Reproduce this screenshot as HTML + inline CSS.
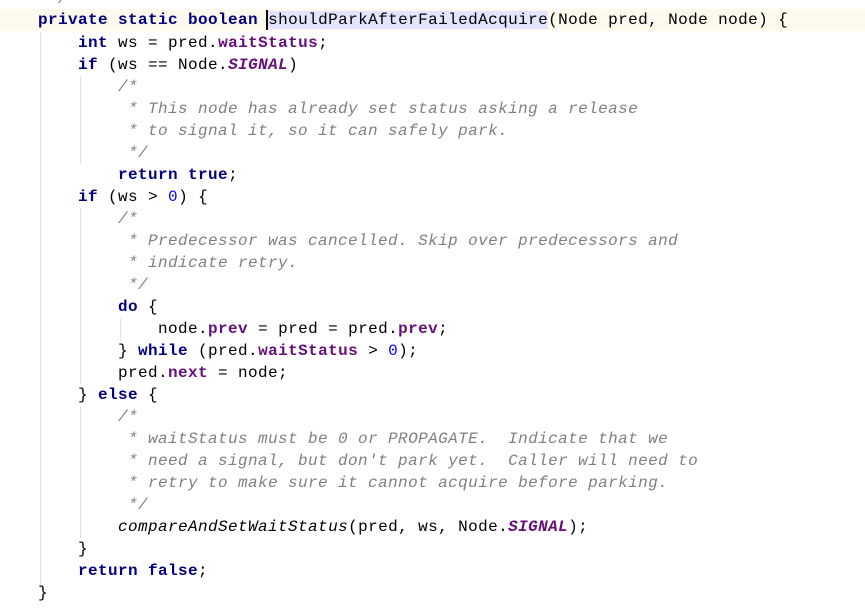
<!DOCTYPE html>
<html><head><style>
html,body{margin:0;padding:0;background:#fff;width:865px;height:609px;overflow:hidden;position:relative}
.w{position:absolute;left:0;top:1px;width:865px;height:609px}
.l{position:absolute;left:-2px;height:22px;line-height:22px;white-space:pre;font-family:"Liberation Mono",monospace;font-size:16px;letter-spacing:0.4px;color:#000}
.k{color:#000080;font-weight:bold}
.f{color:#660e7a;font-weight:bold}
.s{color:#660e7a;font-weight:bold;font-style:italic}
.c{color:#808080;font-style:italic}
.n{color:#0000ff}
.i{font-style:italic}
.hl{background:#e4e4ff}
.g{position:absolute;width:1px;background:#e2e2e2}
</style></head><body>
<div style="position:absolute;left:0;top:9px;width:865px;height:22px;background:#fdf9ec"></div>
<div class="w">
<div class="g" style="left:40px;top:31px;height:556px"></div>
<div class="g" style="left:80px;top:75px;height:88px"></div>
<div class="g" style="left:80px;top:207px;height:176px"></div>
<div class="g" style="left:120px;top:317px;height:22px"></div>
<div class="g" style="left:80px;top:405px;height:132px"></div>
<div class="l c" style="top:-13px">     */</div>
<div class="l" style="top:8px">    <span class="k">private static boolean</span> <span class="hl">shouldParkAfterFailedAcquire</span>(Node pred, Node node) {</div>
<div style="position:absolute;left:266px;top:9px;width:2px;height:20px;background:#000"></div>
<div class="l" style="top:31px">        <span class="k">int</span> ws = pred.<span class="f">waitStatus</span>;</div>
<div class="l" style="top:53px">        <span class="k">if</span> (ws == Node.<span class="s">SIGNAL</span>)</div>
<div class="l c" style="top:75px">            /*</div>
<div class="l c" style="top:97px">             * This node has already set status asking a release</div>
<div class="l c" style="top:119px">             * to signal it, so it can safely park.</div>
<div class="l c" style="top:141px">             */</div>
<div class="l" style="top:163px">            <span class="k">return true</span>;</div>
<div class="l" style="top:185px">        <span class="k">if</span> (ws &gt; <span class="n">0</span>) {</div>
<div class="l c" style="top:207px">            /*</div>
<div class="l c" style="top:229px">             * Predecessor was cancelled. Skip over predecessors and</div>
<div class="l c" style="top:251px">             * indicate retry.</div>
<div class="l c" style="top:273px">             */</div>
<div class="l" style="top:295px">            <span class="k">do</span> {</div>
<div class="l" style="top:317px">                node.<span class="f">prev</span> = pred = pred.<span class="f">prev</span>;</div>
<div class="l" style="top:339px">            } <span class="k">while</span> (pred.<span class="f">waitStatus</span> &gt; <span class="n">0</span>);</div>
<div class="l" style="top:361px">            pred.<span class="f">next</span> = node;</div>
<div class="l" style="top:383px">        } <span class="k">else</span> {</div>
<div class="l c" style="top:405px">            /*</div>
<div class="l c" style="top:427px">             * waitStatus must be 0 or PROPAGATE.  Indicate that we</div>
<div class="l c" style="top:449px">             * need a signal, but don't park yet.  Caller will need to</div>
<div class="l c" style="top:471px">             * retry to make sure it cannot acquire before parking.</div>
<div class="l c" style="top:493px">             */</div>
<div class="l" style="top:515px">            <span class="i">compareAndSetWaitStatus</span>(pred, ws, Node.<span class="s">SIGNAL</span>);</div>
<div class="l" style="top:537px">        }</div>
<div class="l" style="top:559px">        <span class="k">return false</span>;</div>
<div class="l" style="top:581px">    }</div>
</div>
</body></html>
